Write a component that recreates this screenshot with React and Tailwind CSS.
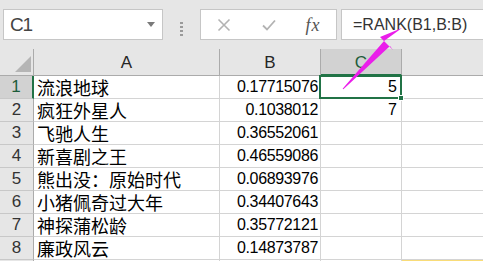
import React from "react";

const rows = [
  ["流浪地球", "0.17715076", "5"],
  ["疯狂外星人", "0.1038012", "7"],
  ["飞驰人生", "0.36552061", ""],
  ["新喜剧之王", "0.46559086", ""],
  ["熊出没：原始时代", "0.06893976", ""],
  ["小猪佩奇过大年", "0.34407643", ""],
  ["神探蒲松龄", "0.35772121", ""],
  ["廉政风云", "0.14873787", ""],
];

function XIcon() {
  return (
    <svg width="14" height="14" viewBox="0 0 14 14">
      <path d="M1.5 1.5 L12.5 12.5 M12.5 1.5 L1.5 12.5" stroke="#b3b3b3" strokeWidth="1.6" fill="none" />
    </svg>
  );
}

function CheckIcon() {
  return (
    <svg width="14" height="12" viewBox="0 0 14 12">
      <path d="M1 6.5 L5 10.5 L13 1.5" stroke="#b3b3b3" strokeWidth="1.8" fill="none" />
    </svg>
  );
}

export default function App() {
  return (
    <div className="relative w-[483px] h-[261px] overflow-hidden bg-[#e6e6e6] font-['Liberation_Sans',sans-serif]">
      {/* formula bar */}
      <div className="flex h-[49px] pt-[9px] pl-[3px]">
        <div className="flex h-[31px] w-[160px] items-center justify-between border border-[#c6c6c6] bg-white pl-[6px] pr-[7px]">
          <span className="text-[19px] leading-none tracking-[-1.2px] text-[#444]">C1</span>
          <svg width="8" height="5" viewBox="0 0 8 5">
            <path d="M0 0 L8 0 L4 5 Z" fill="#7a7a7a" />
          </svg>
        </div>
        <div className="flex w-[37px] flex-col items-center justify-center gap-[2px]">
          <div className="h-[2px] w-[3px] bg-[#9a9a9a]" />
          <div className="h-[2px] w-[3px] bg-[#9a9a9a]" />
          <div className="h-[2px] w-[3px] bg-[#9a9a9a]" />
          <div className="h-[2px] w-[3px] bg-[#9a9a9a]" />
        </div>
        <div className="flex h-[31px] w-[137px] items-center border border-[#c6c6c6] bg-white">
          <div className="flex w-[46px] justify-center"><XIcon /></div>
          <div className="flex w-[44px] justify-center"><CheckIcon /></div>
          <div className="flex w-[44px] justify-center font-['Liberation_Serif',serif] text-[18px] italic leading-none text-[#555]">
            <span className="tracking-[1px]">fx</span>
          </div>
        </div>
        <div className="ml-[4px] flex h-[31px] flex-1 items-center border border-r-0 border-[#c6c6c6] bg-white pl-[11px]">
          <span className="text-[16px] leading-none text-[#333]">=RANK(B1,B:B)</span>
        </div>
      </div>

      {/* header row */}
      <div className="flex h-[27px]">
        <div className="relative w-[34px] border-r border-b border-[#ababab] bg-[#e6e6e6]">
          <svg className="absolute right-[2px] bottom-[3px]" width="16" height="16" viewBox="0 0 16 16">
            <path d="M16 0 L16 16 L0 16 Z" fill="#b5b5b5" />
          </svg>
        </div>
        <div className="flex w-[186px] items-center justify-center border-r border-b border-[#ababab] bg-[#e6e6e6] pt-[1px] text-[17px] text-[#262626]">A</div>
        <div className="flex w-[101px] items-center justify-center border-r border-b border-[#ababab] bg-[#e6e6e6] pt-[1px] text-[17px] text-[#262626]">B</div>
        <div className="flex w-[81px] items-center justify-center border-r border-b-2 border-r-[#ababab] border-b-[#217346] bg-[#d2d2d2] pt-[2px] text-[17px] text-[#1e5c3a]">C</div>
        <div className="flex-1 border-b border-[#ababab] bg-[#e6e6e6]" />
      </div>

      {/* data rows */}
      {rows.map((r, i) => {
        const sel = i === 0;
        return (
          <div key={i} className="flex h-[23px]">
            <div
              className={
                sel
                  ? "flex w-[34px] items-end justify-center border-r-2 border-b border-r-[#217346] border-b-[#c8c8c8] bg-[#d2d2d2] pb-[1px] text-[17px] leading-[20px] text-[#1e5c3a]"
                  : "flex w-[34px] items-end justify-center border-r border-b border-r-[#ababab] border-b-[#c8c8c8] bg-[#e6e6e6] pb-[1px] text-[17px] leading-[20px] text-[#333]"
              }
            >
              {i + 1}
            </div>
            <div className="flex w-[186px] items-end border-r border-b border-[#d4d4d4] bg-white pl-[3px] pb-[1px] font-['Noto_Sans_CJK_SC',sans-serif] text-[18px] leading-[20px] text-black">
              {r[0]}
            </div>
            <div className="flex w-[101px] items-end justify-end border-r border-b border-[#d4d4d4] bg-white pr-[2px] pb-[1px] text-[16px] leading-[20px] tracking-[-0.35px] text-black">
              {r[1]}
            </div>
            <div className="flex w-[81px] items-end justify-end border-r border-b border-[#d4d4d4] bg-white pr-[4px] pb-[1px] text-[16px] leading-[20px] text-black">
              {r[2]}
            </div>
            <div className="flex-1 border-b border-[#d4d4d4] bg-white" />
          </div>
        );
      })}
      <div className="flex h-[23px]">
        <div className="w-[34px] border-r border-[#ababab] bg-[#e6e6e6]" />
        <div className="w-[186px] border-r border-[#d4d4d4] bg-white" />
        <div className="w-[101px] border-r border-[#d4d4d4] bg-white" />
        <div className="w-[81px] border-r border-[#d4d4d4] bg-white" />
        <div className="flex-1 bg-[#f9dc78]" />
      </div>

      {/* selection border for C1 */}
      <div className="absolute left-[319px] top-[75px] h-[24px] w-[83px] border-2 border-[#217346]" />
      <div className="absolute left-[398px] top-[95px] h-[6px] w-[6px] border border-white bg-[#217346]" />

      {/* pink arrow */}
      <svg className="absolute left-0 top-0" width="483" height="261" viewBox="0 0 483 261">
        <polygon points="402,28 380,37 393,50 390,46 343.4,89.3 342.6,88.7 384,41" fill="#ea1eea" />
      </svg>
    </div>
  );
}
